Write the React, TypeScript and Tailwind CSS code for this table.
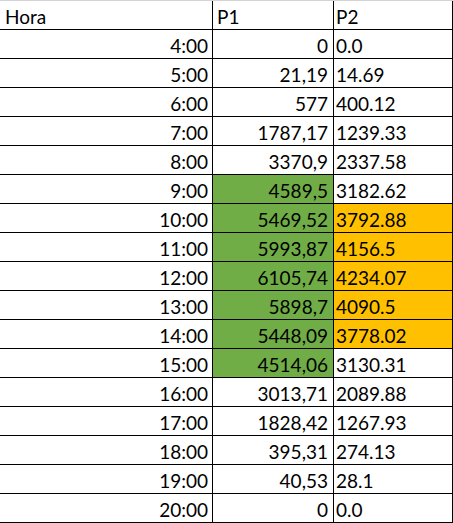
import React from "react";

type Row = { h: string; p1: string; p2: string; g?: boolean; o?: boolean };

const rows: Row[] = [
  { h: "4:00", p1: "0", p2: "0.0" },
  { h: "5:00", p1: "21,19", p2: "14.69" },
  { h: "6:00", p1: "577", p2: "400.12" },
  { h: "7:00", p1: "1787,17", p2: "1239.33" },
  { h: "8:00", p1: "3370,9", p2: "2337.58" },
  { h: "9:00", p1: "4589,5", p2: "3182.62", g: true },
  { h: "10:00", p1: "5469,52", p2: "3792.88", g: true, o: true },
  { h: "11:00", p1: "5993,87", p2: "4156.5", g: true, o: true },
  { h: "12:00", p1: "6105,74", p2: "4234.07", g: true, o: true },
  { h: "13:00", p1: "5898,7", p2: "4090.5", g: true, o: true },
  { h: "14:00", p1: "5448,09", p2: "3778.02", g: true, o: true },
  { h: "15:00", p1: "4514,06", p2: "3130.31", g: true },
  { h: "16:00", p1: "3013,71", p2: "2089.88" },
  { h: "17:00", p1: "1828,42", p2: "1267.93" },
  { h: "18:00", p1: "395,31", p2: "274.13" },
  { h: "19:00", p1: "40,53", p2: "28.1" },
  { h: "20:00", p1: "0", p2: "0.0" },
];

export default function App() {
  return (
    <div
      className="w-[453px] h-[523px] bg-white text-black text-[19px] leading-[25px]"
      style={{ fontFamily: "Lato, 'Liberation Sans', sans-serif" }}
    >
      <div className="flex h-[30px] border-t border-b border-t-[#d4d4d4] border-b-black">
        <div className="w-[213px] border-r border-black flex items-end pl-[5px]">Hora</div>
        <div className="w-[121px] border-r border-black flex items-end pl-[4px]">P1</div>
        <div className="w-[119px] border-r border-black flex items-end pl-[2px]">P2</div>
      </div>
      {rows.map((r) => (
        <div key={r.h} className="flex h-[29px] border-b border-black">
          <div className="w-[213px] border-r border-black flex items-end justify-end pr-[4px]">{r.h}</div>
          <div
            className={`w-[121px] border-r border-black flex items-end justify-end pr-[5px] ${
              r.g ? "bg-[#70ad47]" : ""
            }`}
          >
            {r.p1}
          </div>
          <div
            className={`w-[119px] border-r border-black flex items-end pl-[2px] ${
              r.o ? "bg-[#ffc000]" : ""
            }`}
          >
            {r.p2}
          </div>
        </div>
      ))}
    </div>
  );
}
